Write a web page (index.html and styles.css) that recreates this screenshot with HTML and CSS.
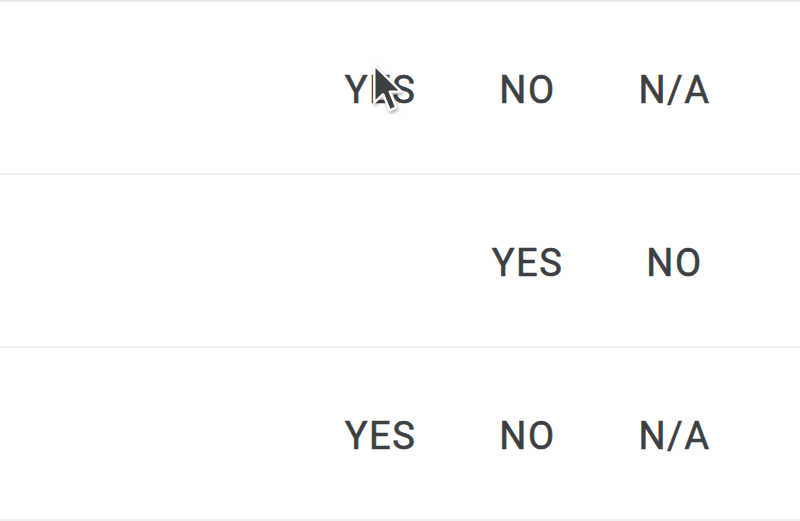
FILE: index.html
```html
<!DOCTYPE html>
<html>
<head>
<meta charset="utf-8">
<link rel="stylesheet" href="styles.css">
</head>
<body>
<div class="list">
  <div class="row">
    <div class="options">
      <span class="opt">YES</span>
      <span class="opt">NO</span>
      <span class="opt">N/A</span>
    </div>
  </div>
  <div class="row">
    <div class="options">
      <span class="opt">YES</span>
      <span class="opt">NO</span>
    </div>
  </div>
  <div class="row">
    <div class="options">
      <span class="opt">YES</span>
      <span class="opt">NO</span>
      <span class="opt">N/A</span>
    </div>
  </div>
</div>
<svg class="cursor" width="31" height="55" viewBox="0 0 14 25" xmlns="http://www.w3.org/2000/svg">
  <path d="M1 1 L1 18 L5 14.2 L8 21.5 L11 20.2 L8 13 L13.3 13 Z" fill="#3c4043" stroke="#ffffff" stroke-width="1.1" stroke-linejoin="round"/>
</svg>
</body>
</html>
```

FILE: styles.css
```css
html, body {
  margin: 0;
  padding: 0;
  background: #ffffff;
}
body {
  width: 800px;
  height: 521px;
  overflow: hidden;
  position: relative;
  font-family: Roboto, "Liberation Sans", sans-serif;
}
.list {
  border-top: 2px solid #e4e8e8;
}
.row {
  height: 171px;
  border-bottom: 2px solid #eff0f0;
  display: flex;
  justify-content: flex-end;
  align-items: center;
  padding-right: 52px;
}
.options {
  display: flex;
}
.opt {
  width: 147px;
  text-align: center;
  font-size: 38px;
  font-weight: 400;
  color: #3c4043;
  letter-spacing: 1.5px;
  padding-top: 4px;
  -webkit-text-stroke: 0.6px #3c4043;
}
.cursor {
  position: absolute;
  left: 372px;
  top: 63px;
  filter: drop-shadow(1px 2px 1.5px rgba(0, 0, 0, 0.3));
}
```
